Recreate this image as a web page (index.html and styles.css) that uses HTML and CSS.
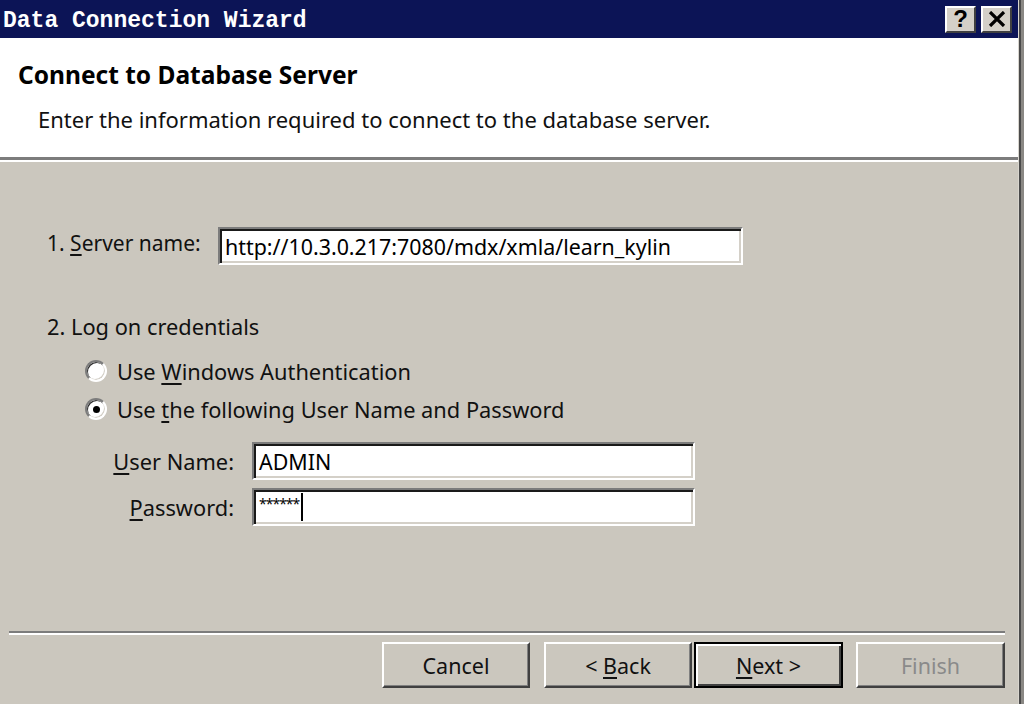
FILE: index.html
```html
<!DOCTYPE html>
<html>
<head>
<meta charset="utf-8">
<link rel="stylesheet" href="styles.css">
</head>
<body>
<div class="frame">
  <div class="window">
    <div class="titlebar">
      <span class="title">Data Connection Wizard</span>
      <div class="tbtns">
        <div class="tbtn"><span class="q">?</span></div>
        <div class="tbtn">
          <svg width="18" height="16" viewBox="0 0 18 16"><path d="M2 1 L16 15 M16 1 L2 15" stroke="#000" stroke-width="3.2" fill="none"/></svg>
        </div>
      </div>
    </div>
    <div class="header">
      <div class="h-title">Connect to Database Server</div>
      <div class="h-sub">Enter the information required to connect to the database server.</div>
    </div>
    <div class="sep sep-top"></div>
    <div class="content">
      <div class="row server-row">
        <span class="lbl-server">1. <u>S</u>erver name:</span>
        <div class="field field-server">http://10.3.0.217:7080/mdx/xmla/learn_kylin</div>
      </div>
      <div class="section">2. Log on credentials</div>
      <div class="radio-row r1">
        <span class="radio"></span>
        <span>Use <u>W</u>indows Authentication</span>
      </div>
      <div class="radio-row r2">
        <span class="radio checked"><span class="dot"></span></span>
        <span>Use <u>t</u>he following User Name and Password</span>
      </div>
      <div class="cred-row c1">
        <span class="lbl-cred"><u>U</u>ser Name:</span>
        <div class="field field-cred">ADMIN</div>
      </div>
      <div class="cred-row c2">
        <span class="lbl-cred"><u>P</u>assword:</span>
        <div class="field field-cred"><span class="stars">******</span><span class="caret"></span></div>
      </div>
    </div>
    <div class="footer">
      <div class="sep sep-bottom"></div>
      <div class="buttons">
        <div class="btn"><span>Cancel</span></div>
        <div class="btn btn-back"><span>&lt; <u>B</u>ack</span></div>
        <div class="btn btn-default"><span><u>N</u>ext &gt;</span></div>
        <div class="btn btn-disabled"><span>Finish</span></div>
      </div>
    </div>
  </div>
  <div class="edge"></div>
</div>
</body>
</html>
```

FILE: styles.css
```css
html, body {
  margin: 0;
  padding: 0;
  width: 1024px;
  height: 704px;
  overflow: hidden;
  background: #cbc7be;
  font-family: "Noto Sans", "DejaVu Sans", sans-serif;
  color: #111;
}
.frame {
  display: flex;
  width: 1024px;
  height: 704px;
}
.window {
  width: 1018px;
  display: flex;
  flex-direction: column;
  background: #cbc7be;
}
.edge {
  width: 6px;
  background: linear-gradient(to right, #d8d5ce 0 1px, #4a4a4a 1px 3px, #8a8884 3px 6px);
}
.titlebar {
  height: 38px;
  flex-shrink: 0;
  background: #0c1456;
  display: flex;
  align-items: center;
  justify-content: space-between;
  padding-left: 3px;
  box-sizing: border-box;
}
.title {
  font-family: "Liberation Mono", monospace;
  font-weight: bold;
  font-size: 23px;
  color: #fff;
  position: relative;
  top: 2px;
}
.tbtns {
  display: flex;
  gap: 5px;
  padding-right: 6px;
}
.tbtn {
  width: 31px;
  height: 27px;
  box-sizing: border-box;
  background: #d4d0c8;
  border-top: 2px solid #fff;
  border-left: 2px solid #fff;
  border-right: 2px solid #404040;
  border-bottom: 2px solid #404040;
  display: flex;
  align-items: center;
  justify-content: center;
}
.q {
  font-family: "Liberation Sans", sans-serif;
  font-weight: bold;
  font-size: 24px;
  line-height: 1;
  color: #000;
}
.header {
  height: 119px;
  flex-shrink: 0;
  background: #fff;
  box-sizing: border-box;
  padding: 21px 0 0 18px;
}
.h-title {
  font-weight: bold;
  font-size: 24.5px;
  line-height: 32px;
  color: #000;
}
.h-sub {
  margin-top: 13px;
  margin-left: 20px;
  font-size: 22px;
  line-height: 30px;
}
.sep {
  height: 5px;
  flex-shrink: 0;
  box-sizing: border-box;
  border-top: 3px solid #7c7c7c;
  border-bottom: 2px solid #fff;
}
.content {
  flex: 1;
  padding: 65px 0 0 47px;
  display: flex;
  flex-direction: column;
  font-size: 21.8px;
}
.row, .cred-row, .radio-row {
  display: flex;
  align-items: center;
  flex-shrink: 0;
}
.lbl-server {
  width: 171px;
  font-size: 21px;
  position: relative;
  top: -3px;
}
.field {
  background: #fff;
  box-sizing: border-box;
  flex-shrink: 0;
  border-top: 2px solid #7c7c7c;
  border-left: 2px solid #7c7c7c;
  border-right: 2px solid #fff;
  border-bottom: 2px solid #fff;
  box-shadow: inset 2px 2px 0 #1a1a1a, inset -2px -2px 0 #d4d0c8;
  display: flex;
  align-items: center;
  padding-left: 5px;
  color: #000;
  font-size: 21.4px;
}
.field-server {
  width: 525px;
  height: 38px;
}
.section {
  margin-top: 47px;
  line-height: 30px;
}
.radio-row {
  margin-left: 38px;
  gap: 10px;
  height: 30px;
}
.r1 { margin-top: 14px; }
.r2 { margin-top: 8px; }
.radio {
  width: 22px;
  height: 22px;
  border-radius: 50%;
  box-sizing: border-box;
  background: #fff;
  border: 2px solid;
  border-color: #7c7c7c #fff #fff #7c7c7c;
  box-shadow: inset 1px 1px 0 #303030, inset -1px -1px 0 #d4d0c8;
  display: flex;
  align-items: center;
  justify-content: center;
}
.dot {
  width: 7px;
  height: 7px;
  border-radius: 50%;
  background: #000;
}
.c1 { margin-top: 18px; }
.c2 { margin-top: 8px; }
.lbl-cred {
  width: 205px;
  text-align: right;
  padding-right: 18px;
  box-sizing: border-box;
}
.field-cred {
  width: 443px;
  height: 38px;
}
.stars {
  font-size: 14px;
  letter-spacing: -1px;
  position: relative;
  top: -4px;
}
.caret {
  width: 2px;
  height: 28px;
  background: #000;
  margin-left: 2px;
}
.footer {
  padding: 0 13px 16px 9px;
}
.sep-bottom {
  height: 4px;
  border-top: 2px solid #7c7c7c;
  border-bottom: 2px solid #fff;
}
.buttons {
  margin-top: 7px;
  display: flex;
  justify-content: flex-end;
}
.btn {
  width: 148px;
  height: 46px;
  box-sizing: border-box;
  border-top: 2px solid #fff;
  border-left: 2px solid #fff;
  border-right: 2px solid #404040;
  border-bottom: 2px solid #404040;
  box-shadow: inset -1px -1px 0 #808080;
  display: flex;
  align-items: center;
  justify-content: center;
  font-size: 21.5px;
  margin-left: 14px;
  background: #cbc7be;
  white-space: pre;
}
.btn-default {
  margin-left: 2px;
  width: 149px;
  border: 2px solid #000;
  box-shadow: inset 2px 2px 0 #fff, inset -2px -2px 0 #404040;
}
.btn-disabled {
  margin-left: 13px;
  width: 149px;
  color: #8a8a8a;
}
u {
  text-decoration-thickness: 2px;
  text-underline-offset: 3px;
}
```
